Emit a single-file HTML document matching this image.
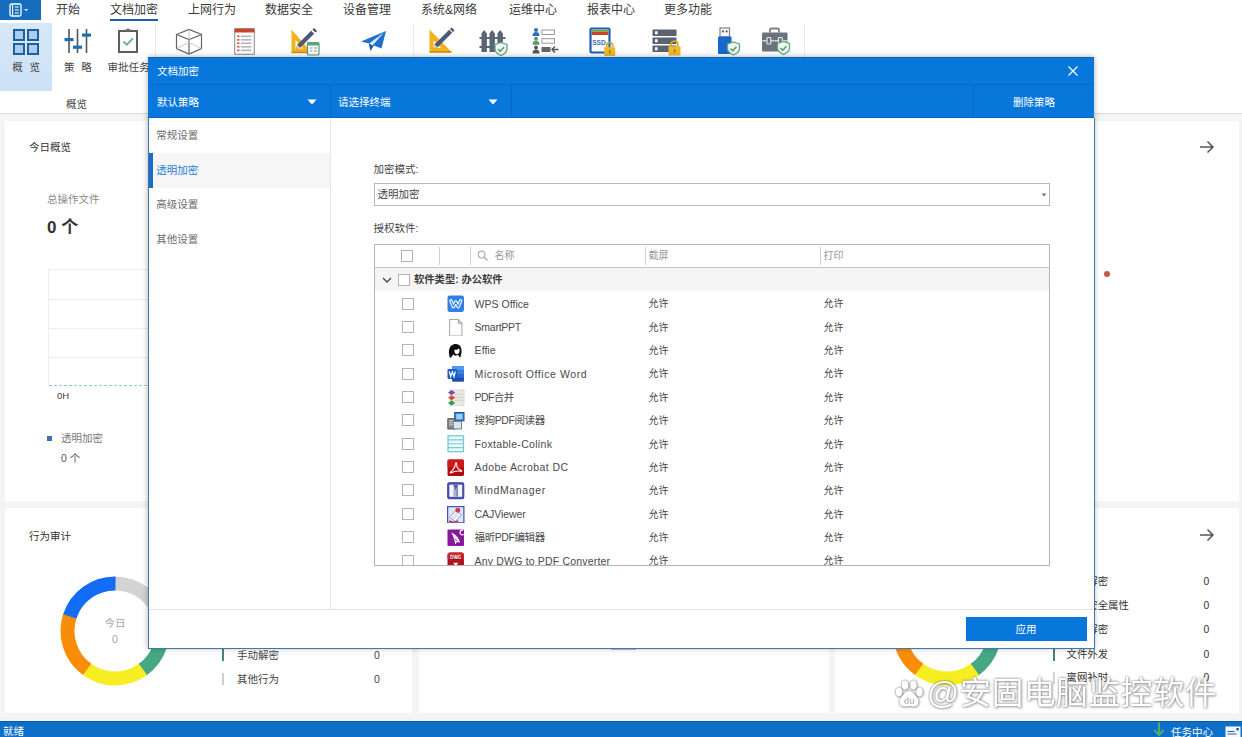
<!DOCTYPE html>
<html lang="zh-CN">
<head>
<meta charset="utf-8">
<title>文档加密</title>
<style>
*{box-sizing:border-box;margin:0;padding:0}
html,body{width:1242px;height:737px;overflow:hidden}
body{position:relative;background:#f4f4f4;font-family:"Liberation Sans","Noto Sans CJK SC",sans-serif;font-size:10.5px;color:#444}
.abs{position:absolute}
.t{position:absolute;white-space:nowrap;line-height:1;transform:translateY(-50%)}
/* ribbon */
#ribbon{left:0;top:0;width:1242px;height:114px;background:#fff;border-bottom:1px solid #dcdcdc}
#menubtn{left:0;top:0;width:41px;height:20px;background:#166dbd}
.tab{font-size:12px;color:#3a3a3a}
.rlabel{font-size:10.5px;color:#444}
.vsep{position:absolute;width:1px;background:#ebebeb}
/* cards */
.card{position:absolute;background:#fff}
.ctitle{font-size:10.5px;color:#333}
/* dialog */
#dlg{left:148px;top:57px;width:946px;height:591px;background:#fff;box-shadow:0 0 6px rgba(0,0,0,.32)}
#dlg .hd{left:0;top:0;width:946px;height:61px;background:#0877dc;border-top:1px solid #0b63ba;border-bottom:1px solid #0a63bc}
#dlg .w{color:#fff;font-size:10.5px}
.dsep{position:absolute;background:#0968c6}
.nav{font-size:10.5px;color:#6a6a6a}
.lbl{font-size:10.5px;color:#444}
.cb{position:absolute;width:12px;height:12px;border:1px solid #b4b4b4;background:#fff}
.hdt{font-size:10px;color:#999}
.rt{font-size:10.5px;color:#4a4a4a}
.ok{font-size:10px;color:#444}
</style>
</head>
<body>

<!-- ================= RIBBON ================= -->
<div id="ribbon" class="abs">
  <div id="menubtn" class="abs">
    <svg class="abs" style="left:9px;top:2.5px" width="26" height="14" viewBox="0 0 26 14">
      <rect x="1" y="1" width="11" height="12" rx="1.5" fill="none" stroke="#fff" stroke-width="1.3"/>
      <path d="M3.6 1v12M5.8 4h4M5.8 7h4M5.8 10h4" stroke="#fff" stroke-width="1.1" fill="none"/>
      <path d="M15 6l2.2 2.2L19.4 6z" fill="#cfe2f7"/>
    </svg>
  </div>
  <span class="t tab" style="left:56px;top:10px">开始</span>
  <span class="t tab" style="left:110px;top:10px">文档加密</span>
  <div class="abs" style="left:110px;top:19px;width:48px;height:2px;background:#1c5fae"></div>
  <span class="t tab" style="left:188px;top:10px">上网行为</span>
  <span class="t tab" style="left:265px;top:10px">数据安全</span>
  <span class="t tab" style="left:343px;top:10px">设备管理</span>
  <span class="t tab" style="left:421px;top:10px">系统&amp;网络</span>
  <span class="t tab" style="left:509px;top:10px">运维中心</span>
  <span class="t tab" style="left:587px;top:10px">报表中心</span>
  <span class="t tab" style="left:664px;top:10px">更多功能</span>

  <div class="abs" style="left:0;top:22.5px;width:52px;height:68.500px;background:linear-gradient(#d6e8f8,#cde2f6)"></div>
  <span class="t rlabel" style="left:12.3px;top:66.5px">概<span style="margin-left:6.8px">览</span></span>
  <span class="t rlabel" style="left:64px;top:66.5px">策<span style="margin-left:6.8px">略</span></span>
  <span class="t rlabel" style="left:107.5px;top:66.5px">审批任务</span>
  <span class="t rlabel" style="left:66px;top:104px">概览</span>
  <div class="vsep" style="left:155px;top:24px;height:84px"></div>
  <div class="vsep" style="left:413px;top:24px;height:84px"></div>
  <div class="vsep" style="left:804px;top:24px;height:84px"></div>
  <svg class="abs" style="left:12px;top:27.5px" width="28" height="28" viewBox="0 0 28 28"><rect x="2" y="2" width="10" height="10" fill="#a9cdf0" stroke="#1f5f9a" stroke-width="2"/><rect x="16" y="2" width="10" height="10" fill="#a9cdf0" stroke="#1f5f9a" stroke-width="2"/><rect x="2" y="16" width="10" height="10" fill="#a9cdf0" stroke="#1f5f9a" stroke-width="2"/><rect x="16" y="16" width="10" height="10" fill="#a9cdf0" stroke="#1f5f9a" stroke-width="2"/></svg>
<svg class="abs" style="left:64px;top:28px" width="28" height="26" viewBox="0 0 28 26"><path d="M5 1v24M13.5 1v24M22.500 1v24" stroke="#555" stroke-width="1.600" fill="none"/><rect x="0.500" y="10" width="9" height="3.200" fill="#1d6fb4"/><rect x="9" y="17.600" width="9" height="3.200" fill="#1d6fb4"/><rect x="18" y="5.500" width="9" height="3.200" fill="#1d6fb4"/></svg>
<svg class="abs" style="left:117px;top:27px" width="22" height="27" viewBox="0 0 22 27"><rect x="2" y="4" width="18" height="21" fill="#fbfbfb" stroke="#5e5e5e" stroke-width="2"/><path d="M7.500 4v-1.500h2.200l1.300-1.500 1.300 1.500h2.200v1.500z" fill="#6a6a6a"/><path d="M6.500 14.500l3.300 3.300 6-6.500" fill="none" stroke="#6fb07a" stroke-width="1.800"/></svg>
<svg class="abs" style="left:175px;top:28px" width="28" height="27" viewBox="0 0 28 27"><path d="M1.500 6.500l12.500-5 12.500 5v14l-12.500 5.500-12.500-5.500z" fill="none" stroke="#666" stroke-width="1.200"/><path d="M1.500 6.500l12.500 5 12.500-5M14 11.500v14.500" fill="none" stroke="#666" stroke-width="1.200"/><path d="M14 1.500v13l-12.500 6M14 14.500l12.500 6" fill="none" stroke="#bdbdbd" stroke-width=".8"/></svg>
<svg class="abs" style="left:234px;top:28px" width="21" height="27" viewBox="0 0 21 27"><rect x="0.700" y="0.700" width="19.600" height="25.600" fill="#fdfdfd" stroke="#8a8a8a" stroke-width="1"/><rect x="0.700" y="0.700" width="19.600" height="3.800" fill="#c8442c"/><rect x="3" y="7.5" width="2.500" height="1.600" fill="#d06040"/><rect x="6.800" y="7.5" width="10.500" height="1.600" fill="#b5b5b5"/><rect x="3" y="11" width="2.500" height="1.600" fill="#d06040"/><rect x="6.800" y="11" width="10.500" height="1.600" fill="#b5b5b5"/><rect x="3" y="14.5" width="2.500" height="1.600" fill="#d06040"/><rect x="6.800" y="14.5" width="10.500" height="1.600" fill="#b5b5b5"/><rect x="3" y="18" width="2.500" height="1.600" fill="#d06040"/><rect x="6.800" y="18" width="10.500" height="1.600" fill="#b5b5b5"/><rect x="3" y="21.5" width="2.500" height="1.600" fill="#d06040"/><rect x="6.800" y="21.5" width="10.500" height="1.600" fill="#b5b5b5"/></svg>
<svg class="abs" style="left:290px;top:27px" width="30" height="29" viewBox="0 0 30 29"><path d="M1.500 2.500v23h20z" fill="#f2b21a"/><path d="M5.500 13v8.500h7.500z" fill="#fff"/><path d="M1.500 25.500h20" stroke="#c98c10" stroke-width="1.400"/><path d="M6 22l1.200-4.200 14-14 3 3-14 14z" fill="#4a5a78"/><path d="M6 22l1.200-4.200 3 3z" fill="#e8c8a0"/><path d="M22.500 2.500l1.500-1.500 3 3-1.500 1.500z" fill="#3d4a66"/><rect x="17.500" y="15.500" width="11.500" height="12.500" rx="1" fill="#f7fbf7" stroke="#5a9a78" stroke-width="1.200"/><rect x="17.500" y="15.500" width="11.500" height="3" fill="#5aa878"/><path d="M20 21h2.500M24 21h3M20 24h2.500M24 24h3" stroke="#8aa0b0" stroke-width="1.200"/></svg>
<svg class="abs" style="left:360px;top:30px" width="27" height="23" viewBox="0 0 27 23"><path d="M1 11.500l25-10.500-4.500 17.500-7.500-3-3.500 5.500-1.500-7.500z" fill="#1f6fd0"/><path d="M9 13.500l15-11-11.500 13z" fill="#fff" opacity=".85"/><path d="M9 13.500l1.500 7.500 2-5z" fill="#1858a8"/></svg>
<svg class="abs" style="left:428px;top:27px" width="28" height="27" viewBox="0 0 28 27"><path d="M1.500 2.500v22.500h22z" fill="#f2b21a"/><path d="M5.500 13.500v7.500h7.500z" fill="#fff"/><path d="M1.500 25h22" stroke="#c98c10" stroke-width="1.600"/><path d="M5.500 21.500l1.200-4.200 14.500-14.500 3 3-14.500 14.500z" fill="#4a5a78"/><path d="M5.500 21.500l1.200-4.200 3 3z" fill="#e8c8a0"/><path d="M22 2l1.500-1.500 3 3-1.500 1.500z" fill="#3d4a66"/></svg>
<svg class="abs" style="left:479px;top:29px" width="30" height="27" viewBox="0 0 30 27"><path d="M0.500 9h26M0.500 18h26" stroke="#5b6472" stroke-width="2.200"/><path d="M2.5 4.500l2.700-3.500 2.700 3.500v18.500h-5.400z" fill="#5b6472"/><path d="M10.5 4.500l2.700-3.500 2.700 3.500v18.500h-5.400z" fill="#5b6472"/><path d="M18.5 4.500l2.700-3.500 2.700 3.500v18.500h-5.400z" fill="#5b6472"/><path d="M22 13.500l6 2v4.500c0 3-2.500 5-6 6.500-3.500-1.500-6-3.500-6-6.500v-4.500z" fill="#eef7f0" stroke="#5fa87a" stroke-width="1.300"/><path d="M19 20l2.200 2.200 3.800-4" fill="none" stroke="#4a9a6a" stroke-width="1.400"/></svg>
<svg class="abs" style="left:532px;top:28px" width="28" height="26" viewBox="0 0 28 26"><circle cx="4" cy="2" r="2" fill="#2a6fc8"/><path d="M0.500 8c0-3 1.500-4 3.500-4s3.500 1 3.500 4z" fill="#2a6fc8"/><circle cx="4" cy="10.7" r="2" fill="#5a9a6a"/><path d="M0.500 16.7c0-3 1.500-4 3.500-4s3.500 1 3.500 4z" fill="#5a9a6a"/><circle cx="4" cy="19.4" r="2" fill="#555"/><path d="M0.500 25.4c0-3 1.500-4 3.500-4s3.500 1 3.500 4z" fill="#555"/><rect x="10" y="2" width="12.500" height="4.500" fill="#fff" stroke="#9a9a9a" stroke-width="1"/><rect x="10" y="10.700" width="12.500" height="4.500" fill="#fff" stroke="#9a9a9a" stroke-width="1"/><rect x="9.500" y="19" width="9" height="5" fill="#666"/><path d="M26.500 21.500h-6M23 18.500l-3 3 3 3" fill="none" stroke="#555" stroke-width="1.500"/></svg>
<svg class="abs" style="left:589px;top:26.5px" width="28" height="30" viewBox="0 0 28 30"><rect x="1.500" y="1.500" width="19" height="24" rx="1" fill="#fbfdff" stroke="#1f5fb0" stroke-width="2.200"/><rect x="2.600" y="2.600" width="16.800" height="2.200" fill="#6aa84f"/><rect x="2.600" y="4.800" width="16.800" height="3.200" fill="#d0402a"/><text x="10" y="17.800" font-family="Liberation Sans, sans-serif" font-size="6.600" font-weight="bold" fill="#3a72b8" text-anchor="middle">SSD</text><path d="M17.700 20.500v-2a3 3 0 0 1 6 0v2" fill="none" stroke="#d9a520" stroke-width="1.700"/><rect x="15.200" y="20.300" width="11" height="8.700" rx="1" fill="#f0b92a"/><rect x="19.900" y="23" width="1.600" height="3.300" fill="#a87a10"/></svg>
<svg class="abs" style="left:651.5px;top:29px" width="29" height="27" viewBox="0 0 29 27"><rect x="0.500" y="0.5" width="24" height="6.600" rx=".800" fill="#5b6272"/><rect x="3" y="2.3" width="2.600" height="3" fill="#fff"/><rect x="0.500" y="8.5" width="24" height="6.600" rx=".800" fill="#5b6272"/><rect x="3" y="10.3" width="2.600" height="3" fill="#fff"/><rect x="0.500" y="16.5" width="24" height="6.600" rx=".800" fill="#5b6272"/><rect x="3" y="18.3" width="2.600" height="3" fill="#fff"/><path d="M19.200 17.500v-2.200a3.300 3.300 0 0 1 6.600 0v2.200" fill="none" stroke="#d9a520" stroke-width="1.700"/><rect x="16.500" y="17.300" width="12" height="9.200" rx="1" fill="#f0b92a"/><rect x="21.800" y="20.200" width="1.600" height="3.500" fill="#a87a10"/></svg>
<svg class="abs" style="left:717px;top:26.5px" width="24" height="29" viewBox="0 0 24 29"><rect x="3" y="1" width="9.500" height="9" fill="#fafafa" stroke="#8a8a8a" stroke-width="1.300"/><rect x="5" y="3.500" width="1.800" height="1.800" fill="#444"/><rect x="8.700" y="3.500" width="1.800" height="1.800" fill="#444"/><rect x="1" y="9.500" width="13.500" height="17.500" rx="1" fill="#1767cf"/><path d="M16.5 15l6 2v4.500c0 3-2.500 5-6 6.500-3.500-1.500-6-3.500-6-6.500v-4.500z" fill="#eef7f0" stroke="#5fa87a" stroke-width="1.300"/><path d="M13.5 21.5l2.200 2.200 3.800-4" fill="none" stroke="#4a9a6a" stroke-width="1.400"/></svg>
<svg class="abs" style="left:761px;top:27px" width="30" height="28" viewBox="0 0 30 28"><path d="M9 5.500v-2.500a1.500 1.500 0 0 1 1.500-1.500h6a1.500 1.500 0 0 1 1.500 1.500v2.500" fill="none" stroke="#7a7f88" stroke-width="1.800"/><rect x="1" y="5.500" width="25.500" height="19" rx="1.300" fill="#6b727e"/><path d="M1 13.800h25.500" stroke="#e8eaee" stroke-width="1.200"/><rect x="6" y="10.500" width="3.800" height="6.500" rx=".800" fill="#6b727e" stroke="#e8eaee" stroke-width="1.100"/><rect x="17.500" y="10.500" width="3.800" height="6.500" rx=".800" fill="#6b727e" stroke="#e8eaee" stroke-width="1.100"/><path d="M22.5 14.5l6 2v4.500c0 3-2.500 5-6 6.500-3.500-1.500-6-3.500-6-6.500v-4.500z" fill="#eef7f0" stroke="#5fa87a" stroke-width="1.300"/><path d="M19.5 21.0l2.200 2.200 3.800-4" fill="none" stroke="#4a9a6a" stroke-width="1.400"/></svg>

</div>

<!-- ================= DASHBOARD ================= -->
<div class="card" style="left:5px;top:121px;width:1234px;height:380px"></div>
<div class="card" style="left:5px;top:508px;width:407px;height:205px"></div>
<div class="card" style="left:419px;top:508px;width:410px;height:205px"></div>
<div class="card" style="left:835px;top:508px;width:404px;height:205px"></div>

<span class="t ctitle" style="left:29px;top:147px">今日概览</span>
<span class="t" style="left:47px;top:199px;font-size:10.5px;color:#8a8a8a">总操作文件</span>
<span class="t" style="left:47px;top:227px;font-size:17px;font-weight:bold;color:#333">0 个</span>
<div class="abs" style="left:48px;top:269px;width:1000px;height:117px;border-left:1px solid #eee">
  <div class="abs" style="left:0;top:0;width:100%;height:1px;background:#efefef"></div>
  <div class="abs" style="left:0;top:30px;width:100%;height:1px;background:#efefef"></div>
  <div class="abs" style="left:0;top:59px;width:100%;height:1px;background:#efefef"></div>
  <div class="abs" style="left:0;top:88px;width:100%;height:1px;background:#efefef"></div>
  <div class="abs" style="left:0;top:116px;width:100%;height:0;border-top:1px dashed #8fd0b4"></div>
</div>
<span class="t" style="left:57px;top:396px;font-size:9.5px;color:#444">0H</span>
<div class="abs" style="left:47px;top:436px;width:5px;height:5px;background:#3f72b8"></div>
<span class="t" style="left:61px;top:438px;font-size:10.5px;color:#777">透明加密</span>
<span class="t" style="left:61px;top:457.5px;font-size:10.5px;color:#555">0 个</span>
<svg class="abs" style="left:1198px;top:139px" width="18" height="16" viewBox="0 0 18 16"><path d="M2 8h13M9.5 2.5L15 8l-5.5 5.5" fill="none" stroke="#555" stroke-width="1.5"/></svg>
<div class="abs" style="left:1103.5px;top:270.5px;width:6px;height:6px;border-radius:50%;background:#c9574a"></div>

<span class="t ctitle" style="left:29px;top:535.5px">行为审计</span>
<svg class="abs" style="left:55px;top:571px" width="120" height="120" viewBox="55 571 120 120"><path d="M115.00 583.50A47.5 47.5 0 0 1 160.33 616.80" fill="none" stroke="#d3d3d3" stroke-width="14"/><path d="M160.18 616.32A47.5 47.5 0 0 1 142.52 669.72" fill="none" stroke="#46a883" stroke-width="14"/><path d="M142.92 669.43A47.5 47.5 0 0 1 86.68 669.13" fill="none" stroke="#f6ee22" stroke-width="14"/><path d="M87.08 669.43A47.5 47.5 0 0 1 69.98 615.85" fill="none" stroke="#fb8c08" stroke-width="14"/><path d="M69.82 616.32A47.5 47.5 0 0 1 115.50 583.50" fill="none" stroke="#126cf6" stroke-width="14"/></svg>
<span class="t" style="left:104.5px;top:623px;font-size:10.5px;color:#a8a8a8">今日</span>
<span class="t" style="left:112px;top:638.5px;font-size:10.5px;color:#a8a8a8">0</span>
<div class="abs" style="left:222px;top:649px;width:2px;height:12px;background:#3f8a80"></div>
<span class="t" style="left:237px;top:655px;font-size:10.5px;color:#444">手动解密</span>
<span class="t" style="left:374px;top:655px;font-size:10.5px;color:#444">0</span>
<div class="abs" style="left:222px;top:673px;width:2px;height:12px;background:#cfcfcf"></div>
<span class="t" style="left:237px;top:679px;font-size:10.5px;color:#444">其他行为</span>
<span class="t" style="left:374px;top:679px;font-size:10.5px;color:#444">0</span>

<svg class="abs" style="left:887px;top:571px" width="120" height="120" viewBox="887 571 120 120"><path d="M947.00 583.50A47.5 47.5 0 0 1 992.33 616.80" fill="none" stroke="#d3d3d3" stroke-width="14"/><path d="M992.18 616.32A47.5 47.5 0 0 1 974.52 669.72" fill="none" stroke="#46a883" stroke-width="14"/><path d="M974.92 669.43A47.5 47.5 0 0 1 918.68 669.13" fill="none" stroke="#f6ee22" stroke-width="14"/><path d="M919.08 669.43A47.5 47.5 0 0 1 901.98 615.85" fill="none" stroke="#fb8c08" stroke-width="14"/><path d="M901.82 616.32A47.5 47.5 0 0 1 947.50 583.50" fill="none" stroke="#126cf6" stroke-width="14"/></svg>
<svg class="abs" style="left:1198px;top:527px" width="18" height="16" viewBox="0 0 18 16"><path d="M2 8h13M9.5 2.5L15 8l-5.5 5.5" fill="none" stroke="#555" stroke-width="1.5"/></svg>
<div class="abs" style="left:1052.5px;top:576.2px;width:2px;height:12px;background:#4c7c78"></div><span class="t" style="left:1066.5px;top:582.2px;font-size:10.4px;color:#333">手动解密</span><span class="t" style="left:1203.5px;top:582.2px;font-size:10.4px;color:#333">0</span>
<div class="abs" style="left:1052.5px;top:600.2px;width:2px;height:12px;background:#4c7c78"></div><span class="t" style="left:1066.5px;top:606.2px;font-size:10.4px;color:#333">修改安全属性</span><span class="t" style="left:1203.5px;top:606.2px;font-size:10.4px;color:#333">0</span>
<div class="abs" style="left:1052.5px;top:624.3px;width:2px;height:12px;background:#4c7c78"></div><span class="t" style="left:1066.5px;top:630.3px;font-size:10.4px;color:#333">批量解密</span><span class="t" style="left:1203.5px;top:630.3px;font-size:10.4px;color:#333">0</span>
<div class="abs" style="left:1052.5px;top:648.5px;width:2px;height:12px;background:#4c7c78"></div><span class="t" style="left:1066.5px;top:654.5px;font-size:10.4px;color:#333">文件外发</span><span class="t" style="left:1203.5px;top:654.5px;font-size:10.4px;color:#333">0</span>
<div class="abs" style="left:1052.5px;top:672.2px;width:2px;height:12px;background:#d4d4d4"></div><span class="t" style="left:1066.5px;top:678.2px;font-size:10.4px;color:#333">离网补时</span><span class="t" style="left:1203.5px;top:678.2px;font-size:10.4px;color:#333">0</span>


<div class="abs" style="left:611px;top:648px;width:25px;height:2px;background:#8a98ac;opacity:.6"></div>
<!-- ================= STATUS BAR ================= -->
<div class="abs" style="left:0;top:720.5px;width:1242px;height:17px;background:#0d6fc8;border-top:1px solid #0b59a6"></div>
<span class="t" style="left:3px;top:731px;color:#fff;font-size:10.5px">就绪</span>
<span class="t" style="left:1171px;top:731.5px;color:#fff;font-size:10.5px">任务中心</span>
<svg class="abs" style="left:1153px;top:722px" width="12" height="15" viewBox="0 0 12 15"><path d="M6 0.500v12M1.500 8l4.500 5 4.500-5" fill="none" stroke="#4caf6e" stroke-width="2"/></svg>
<svg class="abs" style="left:1225px;top:726px" width="16" height="11" viewBox="0 0 16 11"><rect x="0.500" y="0.500" width="15" height="10.500" fill="#f4f7fb"/><rect x="11.300" y="2" width="2.600" height="2.400" fill="#1b5fae"/><path d="M2.500 5.500h7M2.500 8h9" stroke="#1b5fae" stroke-width="1.200"/></svg>


<!-- ================= DIALOG ================= -->
<div id="dlg" class="abs">
  <div class="hd abs"></div>
  <span class="t w" style="left:9px;top:13.7px">文档加密</span>
<svg class="abs" style="left:919px;top:8px" width="12" height="12" viewBox="0 0 12 12"><path d="M1.5 1.5l9 9M10.5 1.5l-9 9" stroke="#fff" stroke-width="1.2" fill="none"/></svg>
<div class="dsep" style="left:0;top:27px;width:946px;height:1px"></div>
<span class="t w" style="left:9px;top:45px">默认策略</span>
<svg class="abs" style="left:159px;top:42px" width="10" height="6" viewBox="0 0 10 6"><path d="M0.5 0.5h9L5 5.5z" fill="#fff"/></svg>
<div class="dsep" style="left:182px;top:28px;width:1px;height:33px"></div>
<span class="t w" style="left:190px;top:45px">请选择终端</span>
<svg class="abs" style="left:340px;top:42px" width="10" height="6" viewBox="0 0 10 6"><path d="M0.5 0.5h9L5 5.5z" fill="#fff"/></svg>
<div class="dsep" style="left:363px;top:28px;width:1px;height:33px"></div>
<div class="dsep" style="left:825px;top:28px;width:1px;height:33px"></div>
<span class="t w" style="left:865px;top:45px">删除策略</span>
<div class="abs" style="left:182px;top:61px;width:1px;height:491.5px;background:#e6e6e6"></div>
<div class="abs" style="left:1px;top:95.5px;width:181px;height:35px;background:#f6f6f6"></div>
<div class="abs" style="left:1px;top:95.5px;width:3.5px;height:35px;background:#1b6ec6"></div>
<span class="t nav" style="left:8.2px;top:77.8px;color:#6a6a6a">常规设置</span>
<span class="t nav" style="left:8.2px;top:113px;color:#2580d8">透明加密</span>
<span class="t nav" style="left:8.2px;top:147.2px;color:#6a6a6a">高级设置</span>
<span class="t nav" style="left:8.2px;top:181.7px;color:#6a6a6a">其他设置</span>
<span class="t lbl" style="left:225.5px;top:112px">加密模式:</span>
<div class="abs" style="left:226px;top:126px;width:676px;height:22.5px;border:1px solid #b9b9b9;background:#fff"></div>
<span class="t lbl" style="left:229.4px;top:137.2px">透明加密</span>
<svg class="abs" style="left:892.5px;top:136px" width="6" height="4" viewBox="0 0 6 4"><path d="M0.5 0.5h5L3 3.5z" fill="#777"/></svg>
<span class="t lbl" style="left:225.5px;top:171px">授权软件:</span>
<div id="tbl" class="abs" style="left:226px;top:186.5px;width:676px;height:322px;border:1px solid #b5b5b5;background:#fff;overflow:hidden">
<div class="abs" style="left:0;top:22.5px;width:676px;height:1px;background:#c4c4c4"></div>
<div class="cb" style="left:26px;top:5.3px"></div>
<div class="abs" style="left:64px;top:2.5px;width:1px;height:18px;background:#cfcfcf"></div>
<div class="abs" style="left:95px;top:2.5px;width:1px;height:18px;background:#cfcfcf"></div>
<div class="abs" style="left:269.5px;top:2.5px;width:1px;height:18px;background:#cfcfcf"></div>
<div class="abs" style="left:444.5px;top:2.5px;width:1px;height:18px;background:#cfcfcf"></div>
<svg class="abs" style="left:101.5px;top:5.5px" width="12" height="12" viewBox="0 0 12 12"><circle cx="4.6" cy="4.6" r="3.4" fill="none" stroke="#b0b0b0" stroke-width="1.2"/><path d="M7.2 7.2l3.4 3.4" stroke="#b0b0b0" stroke-width="1.4"/></svg>
<span class="t hdt" style="left:119.5px;top:11.3px">名称</span>
<span class="t hdt" style="left:273.6px;top:11.3px">截屏</span>
<span class="t hdt" style="left:448.6px;top:11.3px">打印</span>
<div class="abs" style="left:0;top:23.5px;width:676px;height:22.500px;background:#f5f5f5"></div>
<svg class="abs" style="left:6.5px;top:32.0px" width="10" height="7" viewBox="0 0 10 7"><path d="M1 1l4 4 4-4" fill="none" stroke="#444" stroke-width="1.3"/></svg>
<div class="cb" style="left:23px;top:29.7px"></div>
<span class="t" style="left:39px;top:35.7px;font-size:10.3px;font-weight:bold;color:#3c3c3c">软件类型: 办公软件</span>
<div class="cb" style="left:26.5px;top:53.1px"></div><div class="abs" style="left:72px;top:50.80px;width:17.5px;height:17.5px"><svg width="17.5" height="17.500" viewBox="0 0 17 17"><rect x="0.5" y="0.5" width="16" height="16" rx="2.200" fill="#2f7fe6"/><path d="M3.800 5.600l2.300 5.800 2.400-4.600 2.400 4.600 2.300-5.800" fill="none" stroke="#fff" stroke-width="3.300" stroke-linejoin="round" stroke-linecap="round"/><path d="M3.800 5.600l2.300 5.800 2.400-4.600 2.400 4.600 2.300-5.800" fill="none" stroke="#2f7fe6" stroke-width="1.100" stroke-linejoin="round" stroke-linecap="round"/></svg></div><span class="t rt" id="r0" style="left:99.6px;top:59.1px;letter-spacing:0.030px">WPS Office</span><span class="t ok" style="left:273.6px;top:59.90px">允许</span><span class="t ok" style="left:448.6px;top:59.90px">允许</span>
<div class="cb" style="left:26.5px;top:76.46px"></div><div class="abs" style="left:72px;top:74.16px;width:17.5px;height:17.5px"><svg width="17.5" height="17.500" viewBox="0 0 17 17"><path d="M2.5 0.5h8.5l3.5 3.5v12.5h-12z" fill="#fdfdfd" stroke="#a8a8a8" stroke-width="1"/><path d="M11 0.5v3.5h3.5" fill="none" stroke="#a8a8a8" stroke-width="1"/></svg></div><span class="t rt" id="r1" style="left:99.6px;top:82.46px;letter-spacing:-0.250px">SmartPPT</span><span class="t ok" style="left:273.6px;top:83.26px">允许</span><span class="t ok" style="left:448.6px;top:83.26px">允许</span>
<div class="cb" style="left:26.5px;top:99.82px"></div><div class="abs" style="left:72px;top:97.52px;width:17.5px;height:17.5px"><svg width="17.5" height="17.500" viewBox="0 0 17 17"><path d="M3.200 15.500c-2-3.500-1.800-9.500 1-12 2.800-2.500 7.600-2 9.200 1.400 1.300 2.800.800 7.200-.600 10.300-1-.600-1.600-1.500-2-2.700-1.500 1.200-3.800 1-4.800-.500-.500 1.500-1.500 2.800-2.800 3.500z" fill="#0c0c0c"/><path d="M7.400 7.400c1.500.300 3.200-.200 4.300-1.400.800 1.700.700 3.800-.300 5-1 1.200-2.800 1.100-3.600-.100-.600-1-.700-2.300-.400-3.500z" fill="#fff"/></svg></div><span class="t rt" id="r2" style="left:99.6px;top:105.82px;letter-spacing:0.040px">Effie</span><span class="t ok" style="left:273.6px;top:106.62px">允许</span><span class="t ok" style="left:448.6px;top:106.62px">允许</span>
<div class="cb" style="left:26.5px;top:123.18px"></div><div class="abs" style="left:72px;top:120.88px;width:17.5px;height:17.5px"><svg width="17.5" height="17.500" viewBox="0 0 17 17"><rect x="5" y="1" width="11.5" height="15" rx="1" fill="#2b6ad0"/><rect x="5" y="1" width="11.5" height="4" fill="#4f9af0"/><rect x="5" y="5" width="11.5" height="3.7" fill="#3580e0"/><rect x="5" y="12.3" width="11.5" height="3.7" fill="#1c4fa8"/><rect x="0.5" y="4" width="9.5" height="9.5" rx="1" fill="#1b5cc0"/><path d="M2.3 6.3l1.3 5 1.6-4.6 1.6 4.600 1.300-5" fill="none" stroke="#fff" stroke-width="1.2"/></svg></div><span class="t rt" id="r3" style="left:99.6px;top:129.18px;letter-spacing:0.571px">Microsoft Office Word</span><span class="t ok" style="left:273.6px;top:129.98px">允许</span><span class="t ok" style="left:448.6px;top:129.98px">允许</span>
<div class="cb" style="left:26.5px;top:146.54px"></div><div class="abs" style="left:72px;top:144.24px;width:17.5px;height:17.5px"><svg width="17.5" height="17.500" viewBox="0 0 17 17"><rect x="3" y="1" width="13.5" height="15.500" fill="#e9e9e6" stroke="#c9c9c4" stroke-width=".7"/><path d="M7 5h8M7 8h8M7 11h8" stroke="#d0d0cc" stroke-width="1"/><path d="M1 3.500l3.5-2.500 3.5 2.500-3.500 2.500z" fill="#7b4fb0"/><path d="M1 8.500l3.5-2.500 3.500 2.500-3.500 2.500z" fill="#d94a3a"/><path d="M1 13.500l3.500-2.500 3.500 2.500-3.500 2.500z" fill="#3a9a4a"/></svg></div><span class="t rt" id="r4" style="left:99.6px;top:152.54px;letter-spacing:-0.600px">PDF合并</span><span class="t ok" style="left:273.6px;top:153.34px">允许</span><span class="t ok" style="left:448.6px;top:153.34px">允许</span>
<div class="cb" style="left:26.5px;top:169.9px"></div><div class="abs" style="left:72px;top:167.60px;width:17.5px;height:17.5px"><svg width="17.5" height="17.500" viewBox="0 0 17 17"><rect x="7.500" y="0.500" width="9" height="8" fill="#3b8de0" stroke="#1d4f96" stroke-width="1"/><rect x="9" y="2" width="6" height="5" fill="#9fd0ff"/><rect x="0.800" y="6.500" width="7" height="10" fill="#8b8b8b" stroke="#444" stroke-width=".8"/><rect x="6" y="9" width="8" height="7.500" fill="#d8e6ee" stroke="#4a6a7a" stroke-width=".8"/><path d="M2 8.500h4M2 10.500h4M2 12.500h4" stroke="#ddd" stroke-width=".8"/></svg></div><span class="t rt" id="r5" style="left:99.6px;top:175.9px;letter-spacing:-0.412px">搜狗PDF阅读器</span><span class="t ok" style="left:273.6px;top:176.70px">允许</span><span class="t ok" style="left:448.6px;top:176.70px">允许</span>
<div class="cb" style="left:26.5px;top:193.26px"></div><div class="abs" style="left:72px;top:190.96px;width:17.5px;height:17.5px"><svg width="17.5" height="17.500" viewBox="0 0 17 17"><rect x="1" y="0.800" width="15" height="15.400" fill="#eefafa" stroke="#78ccd4" stroke-width="1.300"/><path d="M1 4.700h15M1 8.500h15M1 12.300h15" stroke="#78ccd4" stroke-width="1.200"/></svg></div><span class="t rt" id="r6" style="left:99.6px;top:199.26px;letter-spacing:0.313px">Foxtable-Colink</span><span class="t ok" style="left:273.6px;top:200.06px">允许</span><span class="t ok" style="left:448.6px;top:200.06px">允许</span>
<div class="cb" style="left:26.5px;top:216.62px"></div><div class="abs" style="left:72px;top:214.32px;width:17.5px;height:17.5px"><svg width="17.5" height="17.500" viewBox="0 0 17 17"><rect x="0.500" y="0.500" width="16" height="16" rx="1.500" fill="#b30b0b"/><rect x="0.500" y="0.500" width="16" height="8" rx="1.500" fill="#cf1a1a"/><path d="M3.500 12.500c2.500-1.500 4.200-4.500 4.800-8 .2-1.200 1.200-1 1.100.1-.3 3 1.600 5.600 4.300 6.400 1 .3.800 1.200-.3 1-3-.6-6.400-.2-9.300 1.400-.9.500-1.400-.4-.6-.9z" fill="none" stroke="#fff" stroke-width="1"/></svg></div><span class="t rt" id="r7" style="left:99.6px;top:222.62px;letter-spacing:0.438px">Adobe Acrobat DC</span><span class="t ok" style="left:273.6px;top:223.42px">允许</span><span class="t ok" style="left:448.6px;top:223.42px">允许</span>
<div class="cb" style="left:26.5px;top:239.98px"></div><div class="abs" style="left:72px;top:237.68px;width:17.5px;height:17.5px"><svg width="17.5" height="17.500" viewBox="0 0 17 17"><rect x="0.700" y="0.700" width="15.600" height="15.600" rx="1.500" fill="#4a52b4" stroke="#3a3f9c" stroke-width="1"/><rect x="2.300" y="2.600" width="12.400" height="11.800" fill="#f4f6fb"/><path d="M6.200 2.600l2.300 6 2.300-6z" fill="#4a52b4"/><path d="M6.200 2.600l2.300 6v5.800h-2.300z" fill="#aab0c4"/><path d="M10.800 2.600l-2.300 6v5.800h2.300z" fill="#8c93ac"/></svg></div><span class="t rt" id="r8" style="left:99.6px;top:245.98px;letter-spacing:0.636px">MindManager</span><span class="t ok" style="left:273.6px;top:246.78px">允许</span><span class="t ok" style="left:448.6px;top:246.78px">允许</span>
<div class="cb" style="left:26.5px;top:263.34px"></div><div class="abs" style="left:72px;top:261.04px;width:17.5px;height:17.5px"><svg width="17.5" height="17.500" viewBox="0 0 17 17"><rect x="0.600" y="0.600" width="15.800" height="15.800" fill="#dfe6f5" stroke="#3f57b8" stroke-width="1.200"/><path d="M2.500 11l6-6.500 5.500 4-6 6.500z" fill="#fff" stroke="#7a86c8" stroke-width=".8"/><path d="M4 12.500l6-6M5.500 13.500l6-6" stroke="#9aa4d8" stroke-width=".7"/><circle cx="10.500" cy="4.200" r="2.400" fill="#d8344a"/><path d="M2 14.500c3 1.500 6 1.500 9 0" stroke="#b03a5a" stroke-width="1.200" fill="none"/></svg></div><span class="t rt" id="r9" style="left:99.6px;top:269.34px;letter-spacing:-0.089px">CAJViewer</span><span class="t ok" style="left:273.6px;top:270.14px">允许</span><span class="t ok" style="left:448.6px;top:270.14px">允许</span>
<div class="cb" style="left:26.5px;top:286.7px"></div><div class="abs" style="left:72px;top:284.40px;width:17.5px;height:17.5px"><svg width="17.5" height="17.500" viewBox="0 0 17 17"><rect x="0.500" y="0.500" width="16" height="16" rx="1" fill="#86189a"/><path d="M4 3.500c4 1.500 7.500 5 8.500 9.500l-2.800-.400-1.700 2.400c-.500-4-1.800-8-4-11.500z" fill="#fff"/><path d="M8 9.500l1.500 2.500" stroke="#86189a" stroke-width=".900"/><path d="M15.500 1.200a2.300 2.300 0 1 0 .800 4" fill="none" stroke="#fff" stroke-width="1.100"/></svg></div><span class="t rt" id="r10" style="left:99.6px;top:292.7px;letter-spacing:-0.412px">福昕PDF编辑器</span><span class="t ok" style="left:273.6px;top:293.50px">允许</span><span class="t ok" style="left:448.6px;top:293.50px">允许</span>
<div class="cb" style="left:26.5px;top:310.06px"></div><div class="abs" style="left:72px;top:307.76px;width:17.5px;height:17.5px"><svg width="17.5" height="17.500" viewBox="0 0 17 17"><rect x="0.500" y="0.500" width="16" height="16" rx="2.500" fill="#b3121f"/><rect x="0.500" y="0.500" width="16" height="7.500" rx="2.500" fill="#d42a34"/><rect x="2" y="3" width="13" height="4.600" fill="#8c0f18"/><text x="8.500" y="7" font-family="Liberation Sans, sans-serif" font-size="4.600" font-weight="bold" fill="#fff" text-anchor="middle">DWG</text><path d="M6 10.500h5l-2.500 3.500z" fill="#fff"/></svg></div><span class="t rt" id="r11" style="left:99.6px;top:316.06px;letter-spacing:0.183px">Any DWG to PDF Converter</span><span class="t ok" style="left:273.6px;top:316.86px">允许</span><span class="t ok" style="left:448.6px;top:316.86px">允许</span>

</div>
<div class="abs" style="left:1px;top:552.3px;width:944px;height:1px;background:#e2e2e2"></div>
<div class="abs" style="left:818px;top:560px;width:120.5px;height:24px;background:#0877dc"></div>
<span class="t w" style="left:867.5px;top:572.3px">应用</span>

</div>

<div class="abs" style="left:148px;top:118px;width:946.5px;height:530.5px;border:1px solid #3f76b4;border-top:none;pointer-events:none"></div>
<div class="abs" style="left:892px;top:674px;width:340px;height:40px;filter:drop-shadow(0 0 1.200px rgba(60,60,60,.750)) drop-shadow(1px 1px 1px rgba(90,90,90,.350));opacity:.93">
<svg class="abs" style="left:2px;top:5px" width="30" height="30" viewBox="0 0 30 30">
<ellipse cx="5" cy="13" rx="3.200" ry="4.200" fill="#fff"/><ellipse cx="11" cy="6" rx="3.200" ry="4.400" fill="#fff"/><ellipse cx="19.500" cy="6" rx="3.200" ry="4.400" fill="#fff"/><ellipse cx="25.500" cy="13" rx="3.200" ry="4.200" fill="#fff"/>
<path d="M15 12c4 0 5.500 3.500 8 6.500 2.500 3 2 8.500-2.500 9-2.500.300-3.500-.600-5.500-.600s-3 .900-5.500.600c-4.500-.500-5-6-2.500-9 2.500-3 4-6.500 8-6.500z" fill="#fff"/>
<text x="15.300" y="25" font-family="Liberation Sans, sans-serif" font-size="9" font-weight="bold" fill="#b9b9b9" text-anchor="middle">du</text></svg>
<span class="t" style="left:35px;top:19.500px;font-size:31.600px;color:#fff;letter-spacing:0.6px">@安固电脑监控软件</span>
</div>

</body>
</html>
